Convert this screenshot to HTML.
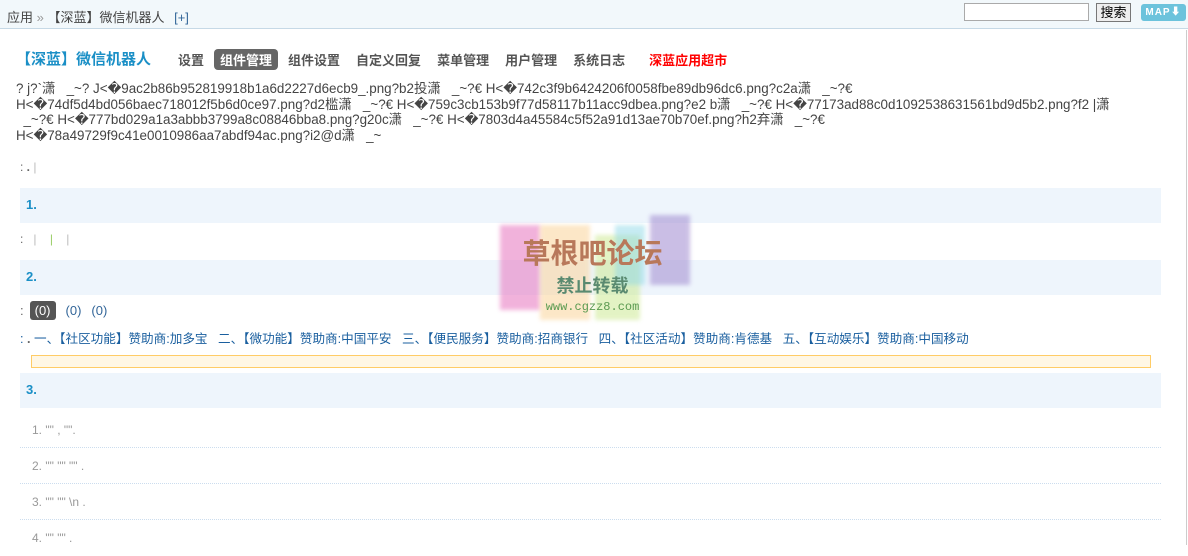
<!DOCTYPE html>
<html><head><meta charset="utf-8"><style>
*{margin:0;padding:0;box-sizing:border-box}
body{width:1188px;height:545px;overflow:hidden;background:#fff;font-family:"Liberation Sans","Noto Sans CJK SC",sans-serif;font-size:12px;color:#333;position:relative}
.top{position:absolute;left:0;top:0;width:1188px;height:29px;background:#f2f8fb;border-bottom:1px solid #c6d9e6}
.crumb{position:absolute;left:7px;top:7px;font-size:13px;color:#444}
.crumb .p{color:#369;margin-left:6px}
.search{position:absolute;left:964px;top:3px;width:125px;height:18px;border:1px solid #aaa;background:#fff}
.btn{position:absolute;left:1096px;top:3px;width:35px;height:19px;border:1px solid #777;background:#eee;font-size:13px;text-align:center;line-height:17px;color:#000}
.map{position:absolute;left:1141px;top:4px;width:45px;height:17px;background:#6cc3dc;border-radius:3px;color:#fff;font-weight:bold;font-size:10px;text-align:center;line-height:17px;letter-spacing:1px}
.rline{position:absolute;left:1186px;top:30px;width:1px;height:515px;background:#ccc}
.title{position:absolute;left:16px;top:48px;font-size:15px;font-weight:bold;color:#1a8fc6}
.nav{position:absolute;left:172px;top:49px;font-size:13px;font-weight:bold;color:#555;white-space:nowrap}
.nav span{display:inline-block;padding:1px 6px;margin-right:4px;border-radius:4px}
.nav .on{background:#666;color:#fff}
.nav .red{color:#f00;margin-left:8px}
.raw{position:absolute;left:16px;top:81px;width:1170px;line-height:15.5px;font-size:13.4px;color:#444;white-space:nowrap}
.line{position:absolute;left:20px;font-size:12px;color:#666}
.band{position:absolute;left:20px;width:1141px;height:35px;background:#eef5fc;color:#1a8fc6;font-weight:bold;font-size:13px;padding:9px 0 0 6px}
.b0{display:inline-block;background:#555;color:#fff;border-radius:3px;padding:2px 5px;margin-left:6px}
.bl{color:#369;margin-left:10px}
.sp{color:#1a5f9f;font-size:12.6px;white-space:nowrap}
.yel{position:absolute;left:31px;top:355px;width:1120px;height:13px;background:#fff7e5;border:1px solid #fc6}
.li{position:absolute;left:20px;width:1141px;height:36px;border-bottom:1px dotted #cde;color:#999;font-size:12px;padding-left:12px;line-height:36px}
.wm{position:absolute;left:495px;top:210px;width:195px;height:115px}
</style></head><body>
<div class="top">
<div class="crumb">应用 <span style="color:#999">»</span> 【深蓝】微信机器人 <span class="p">[+]</span></div>
<div class="search"></div>
<div class="btn">搜索</div>
<div class="map">MAP⬇</div>
</div>
<div class="rline"></div>
<div class="title">【深蓝】微信机器人</div>
<div class="nav"><span>设置</span><span class="on">组件管理</span><span>组件设置</span><span>自定义回复</span><span>菜单管理</span><span>用户管理</span><span>系统日志</span><span class="red">深蓝应用超市</span></div>
<div class="raw">? j?`潇 &nbsp; _~? J&lt;�9ac2b86b952819918b1a6d2227d6ecb9_.png?b2投潇 &nbsp; _~?€ H&lt;�742c3f9b6424206f0058fbe89db96dc6.png?c2a潇 &nbsp; _~?€<br>H&lt;�74df5d4bd056baec718012f5b6d0ce97.png?d2槛潇 &nbsp; _~?€ H&lt;�759c3cb153b9f77d58117b11acc9dbea.png?e2 b潇 &nbsp; _~?€ H&lt;�77173ad88c0d1092538631561bd9d5b2.png?f2 |潇<br>&nbsp; _~?€ H&lt;�777bd029a1a3abbb3799a8c08846bba8.png?g20c潇 &nbsp; _~?€ H&lt;�7803d4a45584c5f52a91d13ae70b70ef.png?h2弃潇 &nbsp; _~?€<br>H&lt;�78a49729f9c41e0010986aa7abdf94ac.png?i2@d潇 &nbsp; _~</div>
<div class="line" style="top:160px">: <b>.</b> <span style="color:#bbb">|</span></div>
<div class="band" style="top:188px">1.</div>
<div class="line" style="top:232px">: &nbsp; <span style="color:#bbb">|</span> &nbsp; &nbsp;<span style="color:#9c6">|</span> &nbsp; &nbsp;<span style="color:#bbb">|</span></div>
<div class="band" style="top:260px">2.</div>
<div class="line" style="top:301px;font-size:13px">:<span class="b0">(0)</span><span class="bl">(0)</span><span class="bl">(0)</span></div>
<div class="line sp" style="top:328px">: <b style="color:#666">.</b> 一、【社区功能】赞助商:加多宝 &nbsp; 二、【微功能】赞助商:中国平安 &nbsp; 三、【便民服务】赞助商:招商银行 &nbsp; 四、【社区活动】赞助商:肯德基 &nbsp; 五、【互动娱乐】赞助商:中国移动</div>
<div class="yel"></div>
<div class="band" style="top:373px">3.</div>
<div class="li" style="top:412px">1. "" , "".</div>
<div class="li" style="top:448px">2. "" "" "" .</div>
<div class="li" style="top:484px">3. "" "" \n .</div>
<div class="li" style="top:520px;border:0">4. "" "" .</div>
<div class="wm">
<div style="position:absolute;left:5px;top:15px;width:40px;height:85px;background:#e97fc4;opacity:.6;filter:blur(2px)"></div>
<div style="position:absolute;left:45px;top:15px;width:50px;height:95px;background:#fbd49a;opacity:.55;filter:blur(2px)"></div>
<div style="position:absolute;left:100px;top:25px;width:45px;height:85px;background:#c9e88a;opacity:.5;filter:blur(2px)"></div>
<div style="position:absolute;left:120px;top:15px;width:30px;height:60px;background:#8fd8e8;opacity:.5;filter:blur(2px)"></div>
<div style="position:absolute;left:155px;top:5px;width:40px;height:70px;background:#a08ad0;opacity:.55;filter:blur(2px)"></div>
<div style="position:absolute;left:0;top:22px;width:195px;text-align:center;font-size:28px;font-weight:bold;color:#b8785a">草根吧论坛</div>
<div style="position:absolute;left:0;top:62px;width:195px;text-align:center;font-size:18px;font-weight:bold;color:#5a8a70">禁止转载</div>
<div style="position:absolute;left:0;top:90px;width:195px;text-align:center;font-size:12px;color:#5a9a50;font-family:'Liberation Mono',monospace">www.cgzz8.com</div>
</div>
</body></html>
